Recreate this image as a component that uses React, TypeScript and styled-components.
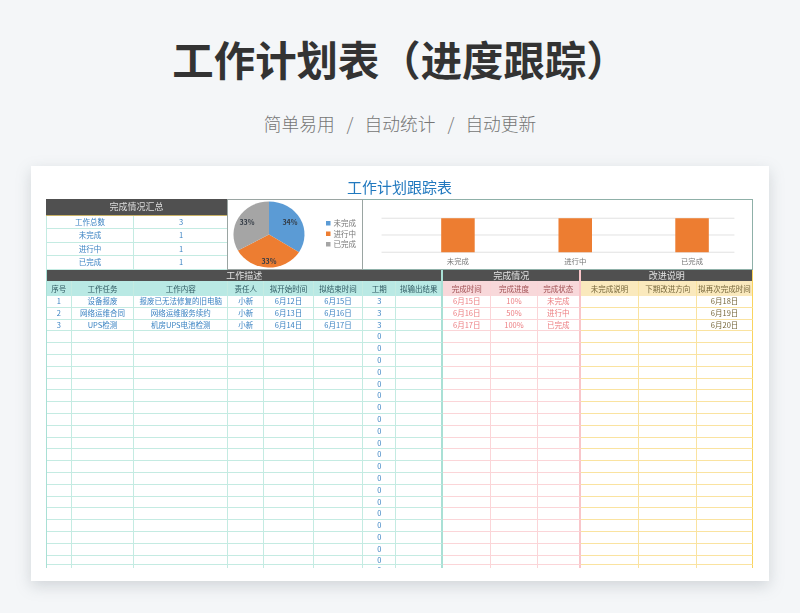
import * as React from 'react';
import styled, { createGlobalStyle } from 'styled-components';

type Zone = 'teal' | 'red' | 'yellow';

const zoneLine = { teal: '#c4ebe2', red: '#fbd5d8', yellow: '#fae3a0' };
const zoneEdge = { teal: '#a9e0d5', red: '#f9c6ca', yellow: '#f9d45e' };
const zoneHead = { teal: '#b9e9e4', red: '#f8d8da', yellow: '#fae9bd' };
const zoneHeadText = { teal: '#2f5a62', red: '#a04f52', yellow: '#75663a' };
const zoneText = { teal: '#3a82c2', red: '#ec7c80', yellow: '#75663a' };

const COLUMNS = '24.7px 62.6px 94px 36px 49.4px 49.6px 33px 47px 48px 46.4px 43.3px 58.3px 58px 56.7px';

const GlobalStyle = createGlobalStyle`
    html, body {
        margin: 0;
        padding: 0;
        background: #f4f6f8;
    }
    body {
        font-family: "Noto Sans CJK SC", "Noto Sans", sans-serif;
    }
`;

const Page = styled.div`
    display: flex;
    flex-direction: column;
    align-items: center;
    width: 800px;
    height: 613px;
    overflow: hidden;
    background: #f4f6f8;
`;

const Heading = styled.h1`
    margin: 31px 0 0;
    height: 54px;
    line-height: 54px;
    font-size: 41.4px;
    font-weight: 700;
    color: #333333;
    white-space: nowrap;
`;

const Subtitle = styled.div`
    display: flex;
    justify-content: center;
    gap: 12px;
    margin-top: 25px;
    height: 26px;
    line-height: 26px;
    font-size: 17.7px;
    font-weight: 300;
    color: #757575;
`;

const Slash = styled.span`
    width: 6px;
    text-align: center;
`;

const Card = styled.div`
    box-sizing: border-box;
    width: 738px;
    height: 415px;
    margin-top: 30px;
    padding: 0 16px 0 15px;
    background: #ffffff;
    box-shadow: 0 5px 14px rgba(120, 128, 136, 0.28);
`;

const Sheet = styled.div`
    filter: blur(0.3px);
`;

const SheetTitle = styled.div`
    height: 33px;
    box-sizing: border-box;
    line-height: 42px;
    text-align: center;
    font-size: 15px;
    color: #2179bf;
`;

const Dashboard = styled.div`
    display: flex;
    height: 71px;
`;

const Summary = styled.div`
    width: 181px;
    display: flex;
    flex-direction: column;
`;

const SummaryTitle = styled.div`
    box-sizing: border-box;
    height: 16.5px;
    line-height: 15px;
    background: #505050;
    border-bottom: 1px solid #c9b266;
    text-align: center;
    font-size: 9px;
    color: #dddddd;
`;

const SummaryRow = styled.div`
    box-sizing: border-box;
    display: grid;
    grid-template-columns: 87px 94px;
    height: 13.5px;
    line-height: 12.5px;
    text-align: center;
    font-size: 7.5px;
    color: #3a82c2;
    border-bottom: 1px solid #c4ebe2;
    border-left: 1px solid #c4ebe2;
    & > span:first-child {
        border-right: 1px solid #c4ebe2;
    }
`;

const PiePanel = styled.div`
    width: 136px;
    box-sizing: border-box;
    border: 1px solid #9aa5a2;
    background: #ffffff;
`;

const BarPanel = styled.div`
    flex: 1;
    box-sizing: border-box;
    border: 1px solid #8fb0a8;
    border-left: none;
    background: #ffffff;
`;

const Chart = styled.svg`
    display: block;
    width: 100%;
    height: 100%;
`;

const Table = styled.div`
    height: 298px;
    overflow: hidden;
    border-left: 1px solid #a9e0d5;
`;

const Row = styled.div<{ $height: number }>`
    display: grid;
    grid-template-columns: ${COLUMNS};
    height: ${(props) => props.$height}px;
    line-height: ${(props) => props.$height - 1}px;
`;

const GroupRow = styled.div`
    display: grid;
    grid-template-columns: 396.3px 138px 172.7px;
    height: 11px;
`;

const Group = styled.div<{ $zone: Zone }>`
    box-sizing: border-box;
    background: #505050;
    border-right: 2px solid ${(props) => zoneEdge[props.$zone]};
    line-height: 11px;
    text-align: center;
    font-size: 9px;
    color: #e2e2e2;
`;

const HeadCell = styled.div<{ $zone: Zone; $end?: boolean }>`
    box-sizing: border-box;
    background: ${(props) => zoneHead[props.$zone]};
    color: ${(props) => zoneHeadText[props.$zone]};
    border-right: ${(props) => (props.$end ? `2px solid ${zoneEdge[props.$zone]}` : `1px solid ${zoneLine[props.$zone]}`)};
    line-height: 15px;
    text-align: center;
    font-size: 7.5px;
    white-space: nowrap;
    overflow: hidden;
`;

const Cell = styled.div<{ $zone: Zone; $end?: boolean }>`
    box-sizing: border-box;
    color: ${(props) => zoneText[props.$zone]};
    border-right: ${(props) => (props.$end ? `2px solid ${zoneEdge[props.$zone]}` : `1px solid ${zoneLine[props.$zone]}`)};
    border-bottom: 1px solid ${(props) => zoneLine[props.$zone]};
    text-align: center;
    font-size: 7.5px;
    white-space: nowrap;
    overflow: hidden;
`;

const zones: Zone[] = ['teal', 'teal', 'teal', 'teal', 'teal', 'teal', 'teal', 'teal', 'red', 'red', 'red', 'yellow', 'yellow', 'yellow'];
const ends = [7, 10, 13];

const heads = ['序号', '工作任务', '工作内容', '责任人', '拟开始时间', '拟结束时间', '工期', '拟输出结果', '完成时间', '完成进度', '完成状态', '未完成说明', '下期改进方向', '拟再次完成时间'];

const filled = [
    ['1', '设备报废', '报废已无法修复的旧电脑', '小新', '6月12日', '6月15日', '3', '', '6月15日', '10%', '未完成', '', '', '6月18日'],
    ['2', '网络运维合同', '网络运维服务续约', '小新', '6月13日', '6月16日', '3', '', '6月16日', '50%', '进行中', '', '', '6月19日'],
    ['3', 'UPS检测', '机房UPS电池检测', '小新', '6月14日', '6月17日', '3', '', '6月17日', '100%', '已完成', '', '', '6月20日'],
];

const blank = ['', '', '', '', '', '', '0', '', '', '', '', '', '', ''];
const rows = [...filled, ...Array.from({ length: 21 }, () => blank)];

const summary = [
    ['工作总数', '3'],
    ['未完成', '1'],
    ['进行中', '1'],
    ['已完成', '1'],
];

const slicePath = (from: number, to: number) => {
    const cx = 41;
    const cy = 34.5;
    const rx = 35.5;
    const ry = 33;
    const point = (deg: number) => {
        const rad = (deg * Math.PI) / 180;
        return `${(cx + rx * Math.sin(rad)).toFixed(2)} ${(cy - ry * Math.cos(rad)).toFixed(2)}`;
    };
    return `M${cx} ${cy} L${point(from)} A${rx} ${ry} 0 0 1 ${point(to)} Z`;
};

const legend = [
    { label: '未完成', color: '#5b9bd5', y: 26 },
    { label: '进行中', color: '#ed7d31', y: 36.5 },
    { label: '已完成', color: '#a5a5a5', y: 47 },
];

const PieChart: React.FC = () => (
    <Chart viewBox="0 0 134 69">
        <path d={slicePath(0, 122.4)} fill="#5b9bd5" />
        <path d={slicePath(122.4, 241.2)} fill="#ed7d31" />
        <path d={slicePath(241.2, 360)} fill="#a5a5a5" />
        <g fontSize="7" fontWeight="700" fill="#333b45" textAnchor="middle">
            <text x="62" y="24.5">34%</text>
            <text x="41" y="63.5">33%</text>
            <text x="19" y="24.5">33%</text>
        </g>
        {legend.map((item) => (
            <g key={item.label}>
                <rect x="98" y={item.y - 5} width="4.5" height="4.5" fill={item.color} />
                <text x="105.5" y={item.y} fontSize="7.5" fill="#777777">{item.label}</text>
            </g>
        ))}
    </Chart>
);

const bars = [
    { label: '未完成', x: 76.5 },
    { label: '进行中', x: 195.5 },
    { label: '已完成', x: 314 },
];

const BarChart: React.FC = () => (
    <Chart viewBox="0 0 389 70">
        <g stroke="#e2e2e2" strokeWidth="1">
            <line x1="16" x2="374" y1="18.5" y2="18.5" />
            <line x1="16" x2="374" y1="35.5" y2="35.5" />
            <line x1="16" x2="374" y1="53" y2="53" />
        </g>
        {bars.map((bar) => (
            <g key={bar.label}>
                <rect x={bar.x} y="18.5" width="34" height="34.5" fill="#ed7d31" />
                <text x={bar.x + 17} y="65" fontSize="7.5" fill="#777777" textAnchor="middle">{bar.label}</text>
            </g>
        ))}
    </Chart>
);

const App: React.FC = () => {
    return (
        <Page>
            <GlobalStyle />
            <Heading>工作计划表（进度跟踪）</Heading>
            <Subtitle>
                <span>简单易用</span>
                <Slash>/</Slash>
                <span>自动统计</span>
                <Slash>/</Slash>
                <span>自动更新</span>
            </Subtitle>
            <Card>
                <Sheet>
                    <SheetTitle>工作计划跟踪表</SheetTitle>
                    <Dashboard>
                        <Summary>
                            <SummaryTitle>完成情况汇总</SummaryTitle>
                            {summary.map(([label, value]) => (
                                <SummaryRow key={label}>
                                    <span>{label}</span>
                                    <span>{value}</span>
                                </SummaryRow>
                            ))}
                        </Summary>
                        <PiePanel><PieChart /></PiePanel>
                        <BarPanel><BarChart /></BarPanel>
                    </Dashboard>
                    <Table>
                        <GroupRow>
                            <Group $zone="teal">工作描述</Group>
                            <Group $zone="red">完成情况</Group>
                            <Group $zone="yellow">改进说明</Group>
                        </GroupRow>
                        <Row $height={15}>
                            {heads.map((head, i) => (
                                <HeadCell key={head} $zone={zones[i]} $end={ends.includes(i)}>{head}</HeadCell>
                            ))}
                        </Row>
                        {rows.map((row, r) => (
                            <Row key={r} $height={r === 22 ? 9 : 11.8}>
                                {row.map((text, i) => (
                                    <Cell key={i} $zone={zones[i]} $end={ends.includes(i)}>{text}</Cell>
                                ))}
                            </Row>
                        ))}
                    </Table>
                </Sheet>
            </Card>
        </Page>
    );
};

export default App;
